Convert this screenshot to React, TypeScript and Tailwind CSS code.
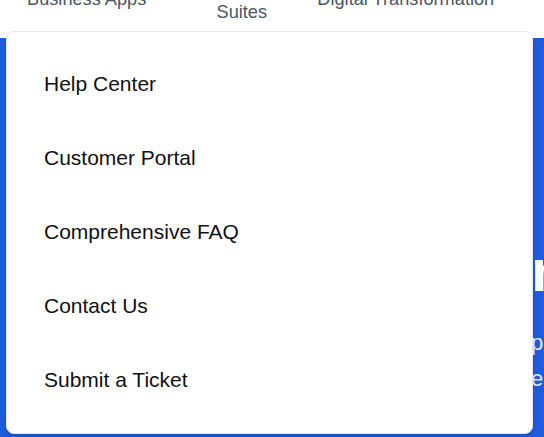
import React from 'react';

const items = ['Help Center', 'Customer Portal', 'Comprehensive FAQ', 'Contact Us', 'Submit a Ticket'];

export default function App() {
  return (
    <div className="relative h-[437px] w-[544px] overflow-hidden bg-white font-['Liberation_Sans',Arial,sans-serif]">
      {/* top nav, scrolled so only the bottom of it shows */}
      <header className="h-[38px] overflow-hidden bg-white">
        <nav className="-mt-[33px] flex h-[64px] items-center text-[18.2px] leading-[26px] text-[#4b5563]">
          <span className="ml-[27px] whitespace-nowrap">Business Apps</span>
          <span className="ml-[49px] w-[93px] text-center">Productivity Suites</span>
          <span className="ml-[29px] whitespace-nowrap">Digital Transformation</span>
        </nav>
      </header>

      {/* hero */}
      <section className="h-[399px] overflow-hidden bg-[#1f5bdc] pl-[531px]">
        <h1 className="mt-[203px] whitespace-nowrap text-[60px] font-bold leading-[60px] text-white">nd</h1>
        <p className="mt-[24px] whitespace-nowrap text-[22px] leading-[36px] text-[#e0ebff]">
          pp
          <br />
          es
        </p>
      </section>

      {/* dropdown menu */}
      <div className="absolute left-[6px] top-[31px] w-[527px] rounded-lg border border-[#e5e7eb] bg-white pb-4 pt-[15px] shadow-md">
        <ul>
          {items.map((label) => (
            <li key={label} className="flex h-[74px] items-center px-[37px] text-[21px] text-[#111]">
              {label}
            </li>
          ))}
        </ul>
      </div>
    </div>
  );
}
